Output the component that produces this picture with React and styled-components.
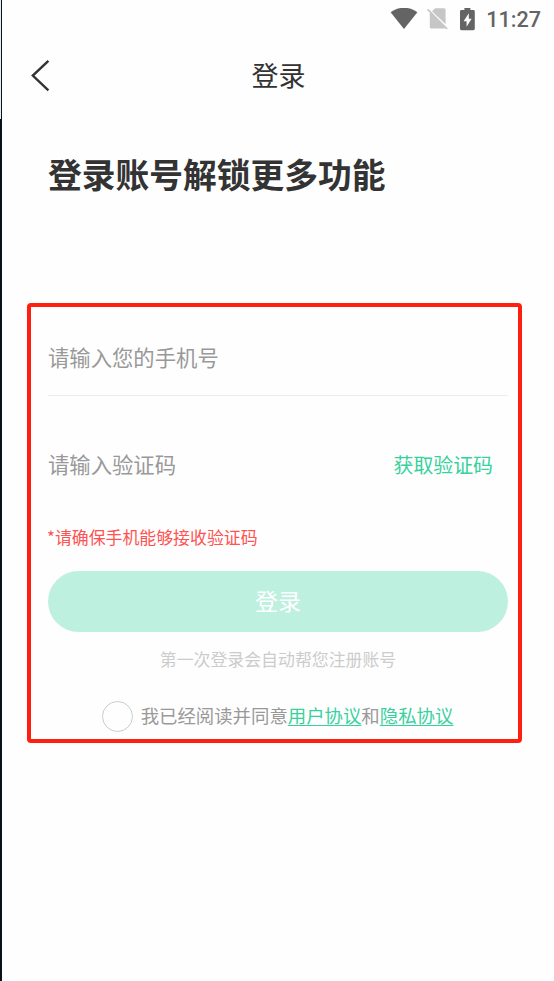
import React from 'react';
import styled, { createGlobalStyle } from 'styled-components';

export default function App() {
  return (
    <>
      <GlobalStyle />
      <Tela>
        <Borda />
        <Conteudo>
          <StatusBar />
          <Topo>
            <Voltar aria-label="返回">
              <svg width="20" height="34" viewBox="0 0 20 34">
                <path d="M18.4 1.8 L2.8 16.6 L18.4 31.4" fill="none" stroke="#333333" strokeWidth="2.4" />
              </svg>
            </Voltar>
            <h1>登录</h1>
          </Topo>
          <Titulo>登录账号解锁更多功能</Titulo>
          <Formulario />
        </Conteudo>
      </Tela>
    </>
  );
}

function StatusBar() {
  return (
    <Status>
      <svg width="28" height="22" viewBox="0 0 28 22">
        <path d="M0.6 4.2 C8.3 -1.7 19.7 -1.7 27.4 4.2 L14 21 Z" fill="#646464" />
      </svg>
      <svg width="22" height="22" viewBox="0 0 22 22">
        <path d="M8.2 0.2 H17 Q18.6 0.2 18.6 1.8 V16.2 L5 3.2 Z" fill="#c6c6c6" />
        <path d="M1.2 0.8 L20.8 20.4 L19.6 21.6 L18.2 20.2 Q17.8 20.6 17 20.6 H4.4 Q2.8 20.6 2.8 19 V4.8 L0 2 Z" fill="#c6c6c6" />
      </svg>
      <svg width="15" height="23" viewBox="0 0 15 23">
        <path
          fillRule="evenodd"
          d="M4.4 0 H10.4 V2 H13.4 Q14.8 2 14.8 3.4 V20.8 Q14.8 22.2 13.4 22.2 H1.4 Q0 22.2 0 20.8 V3.4 Q0 2 1.4 2 H4.4 Z M8.8 5.2 L3.6 13.2 H6.6 V18.8 L11.6 10.8 H8.8 Z"
          fill="#646464"
        />
      </svg>
      <span>11:27</span>
    </Status>
  );
}

function Formulario() {
  return (
    <Quadro>
      <CampoTelefone>请输入您的手机号</CampoTelefone>
      <CampoCodigo>
        <p>请输入验证码</p>
        <BotaoCodigo>获取验证码</BotaoCodigo>
      </CampoCodigo>
      <Aviso>*请确保手机能够接收验证码</Aviso>
      <BotaoEntrar>登录</BotaoEntrar>
      <Dica>第一次登录会自动帮您注册账号</Dica>
      <Acordo>
        <Circulo />
        <p>
          我已经阅读并同意<Link>用户协议</Link>和<Link>隐私协议</Link>
        </p>
      </Acordo>
    </Quadro>
  );
}

const GlobalStyle = createGlobalStyle`
  * {
    box-sizing: border-box;
    margin: 0;
    padding: 0;
  }

  body {
    background-color: #fefefe;
    font-family: "Noto Sans CJK SC", sans-serif;
  }

  button {
    font-family: inherit;
    background: none;
    border: none;
    cursor: pointer;
  }
`;

const Tela = styled.div`
  width: 554px;
  height: 981px;
  overflow: hidden;

  display: flex;
`;

const Borda = styled.div`
  width: 2px;
  flex-shrink: 0;

  background-color: #0b121c;

  &::before {
    content: "";
    display: block;
    width: 1px;
    height: 119px;
    background-color: #e6eef5;
  }
`;

const Conteudo = styled.div`
  flex: 1;

  display: flex;
  flex-direction: column;
`;

const Status = styled.div`
  height: 38px;
  padding-right: 13px;

  display: flex;
  align-items: center;
  justify-content: flex-end;

  & > svg {
    flex-shrink: 0;
  }

  & > svg:nth-child(1) {
    margin-right: 9px;
  }

  & > svg:nth-child(2) {
    margin-right: 11px;
  }

  & > svg:nth-child(3) {
    margin-right: 11px;
  }

  & > span {
    padding-top: 2px;

    font-family: Roboto, sans-serif;
    font-weight: 500;
    font-size: 21.6px;
    line-height: 36px;
    color: #646464;
  }
`;

const Topo = styled.header`
  height: 76px;
  padding: 0 28px 0 27px;

  display: grid;
  grid-template-columns: 22px 1fr 20px;
  align-items: center;

  & > h1 {
    padding-bottom: 2px;

    font-weight: 400;
    font-size: 27px;
    line-height: 40px;
    text-align: center;
    color: #333333;
  }
`;

const Voltar = styled.button`
  height: 34px;
`;

const Titulo = styled.h2`
  height: 50px;
  margin-top: 35px;
  padding-left: 46px;

  font-weight: 700;
  font-size: 33.75px;
  line-height: 50px;
  color: #333333;
`;

const Quadro = styled.section`
  width: 495px;
  height: 440px;
  margin: 104px 0 0 25px;
  padding: 0 10px 0 17px;

  display: flex;
  flex-direction: column;

  border: 4px solid #ff1f10;
  border-radius: 4px;
`;

const CampoTelefone = styled.p`
  height: 89px;
  padding-top: 34px;

  font-size: 21.35px;
  line-height: 32px;
  color: #999999;

  border-bottom: 1px solid #ececec;
`;

const CampoCodigo = styled.div`
  height: 107px;
  padding: 52px 15px 0 0;

  display: flex;
  align-items: flex-start;
  justify-content: space-between;

  font-size: 21.35px;
  line-height: 32px;
  color: #999999;
`;

const BotaoCodigo = styled.button`
  font-size: 19.9px;
  line-height: 34px;
  color: #36d19c;
`;

const Aviso = styled.p`
  height: 68px;
  padding-top: 21px;
  margin-left: -1px;

  font-size: 16.9px;
  line-height: 26px;
  color: #ff5252;
`;

const BotaoEntrar = styled.button`
  height: 61px;
  flex-shrink: 0;

  font-size: 23px;
  line-height: 59px;
  padding-bottom: 2px;
  color: #ffffff;

  background-color: #bdf0df;
  border-radius: 31px;
`;

const Dica = styled.p`
  height: 69px;
  padding-top: 14px;

  font-size: 16.9px;
  line-height: 26px;
  text-align: center;
  color: #cccccc;
`;

const Acordo = styled.div`
  height: 31px;

  display: flex;
  align-items: center;
  justify-content: center;
  gap: 7.5px;
  padding-right: 0.5px;

  & > p {
    padding-bottom: 2px;

    font-size: 18.4px;
    line-height: 29px;
    color: #999999;
  }
`;

const Circulo = styled.span`
  width: 31px;
  height: 31px;

  border: 1px solid #cccccc;
  border-radius: 50%;
`;

const Link = styled.a`
  color: #36d19c;
  text-decoration: underline;
  text-decoration-thickness: 1px;
  text-underline-offset: 2px;
  cursor: pointer;
`;
